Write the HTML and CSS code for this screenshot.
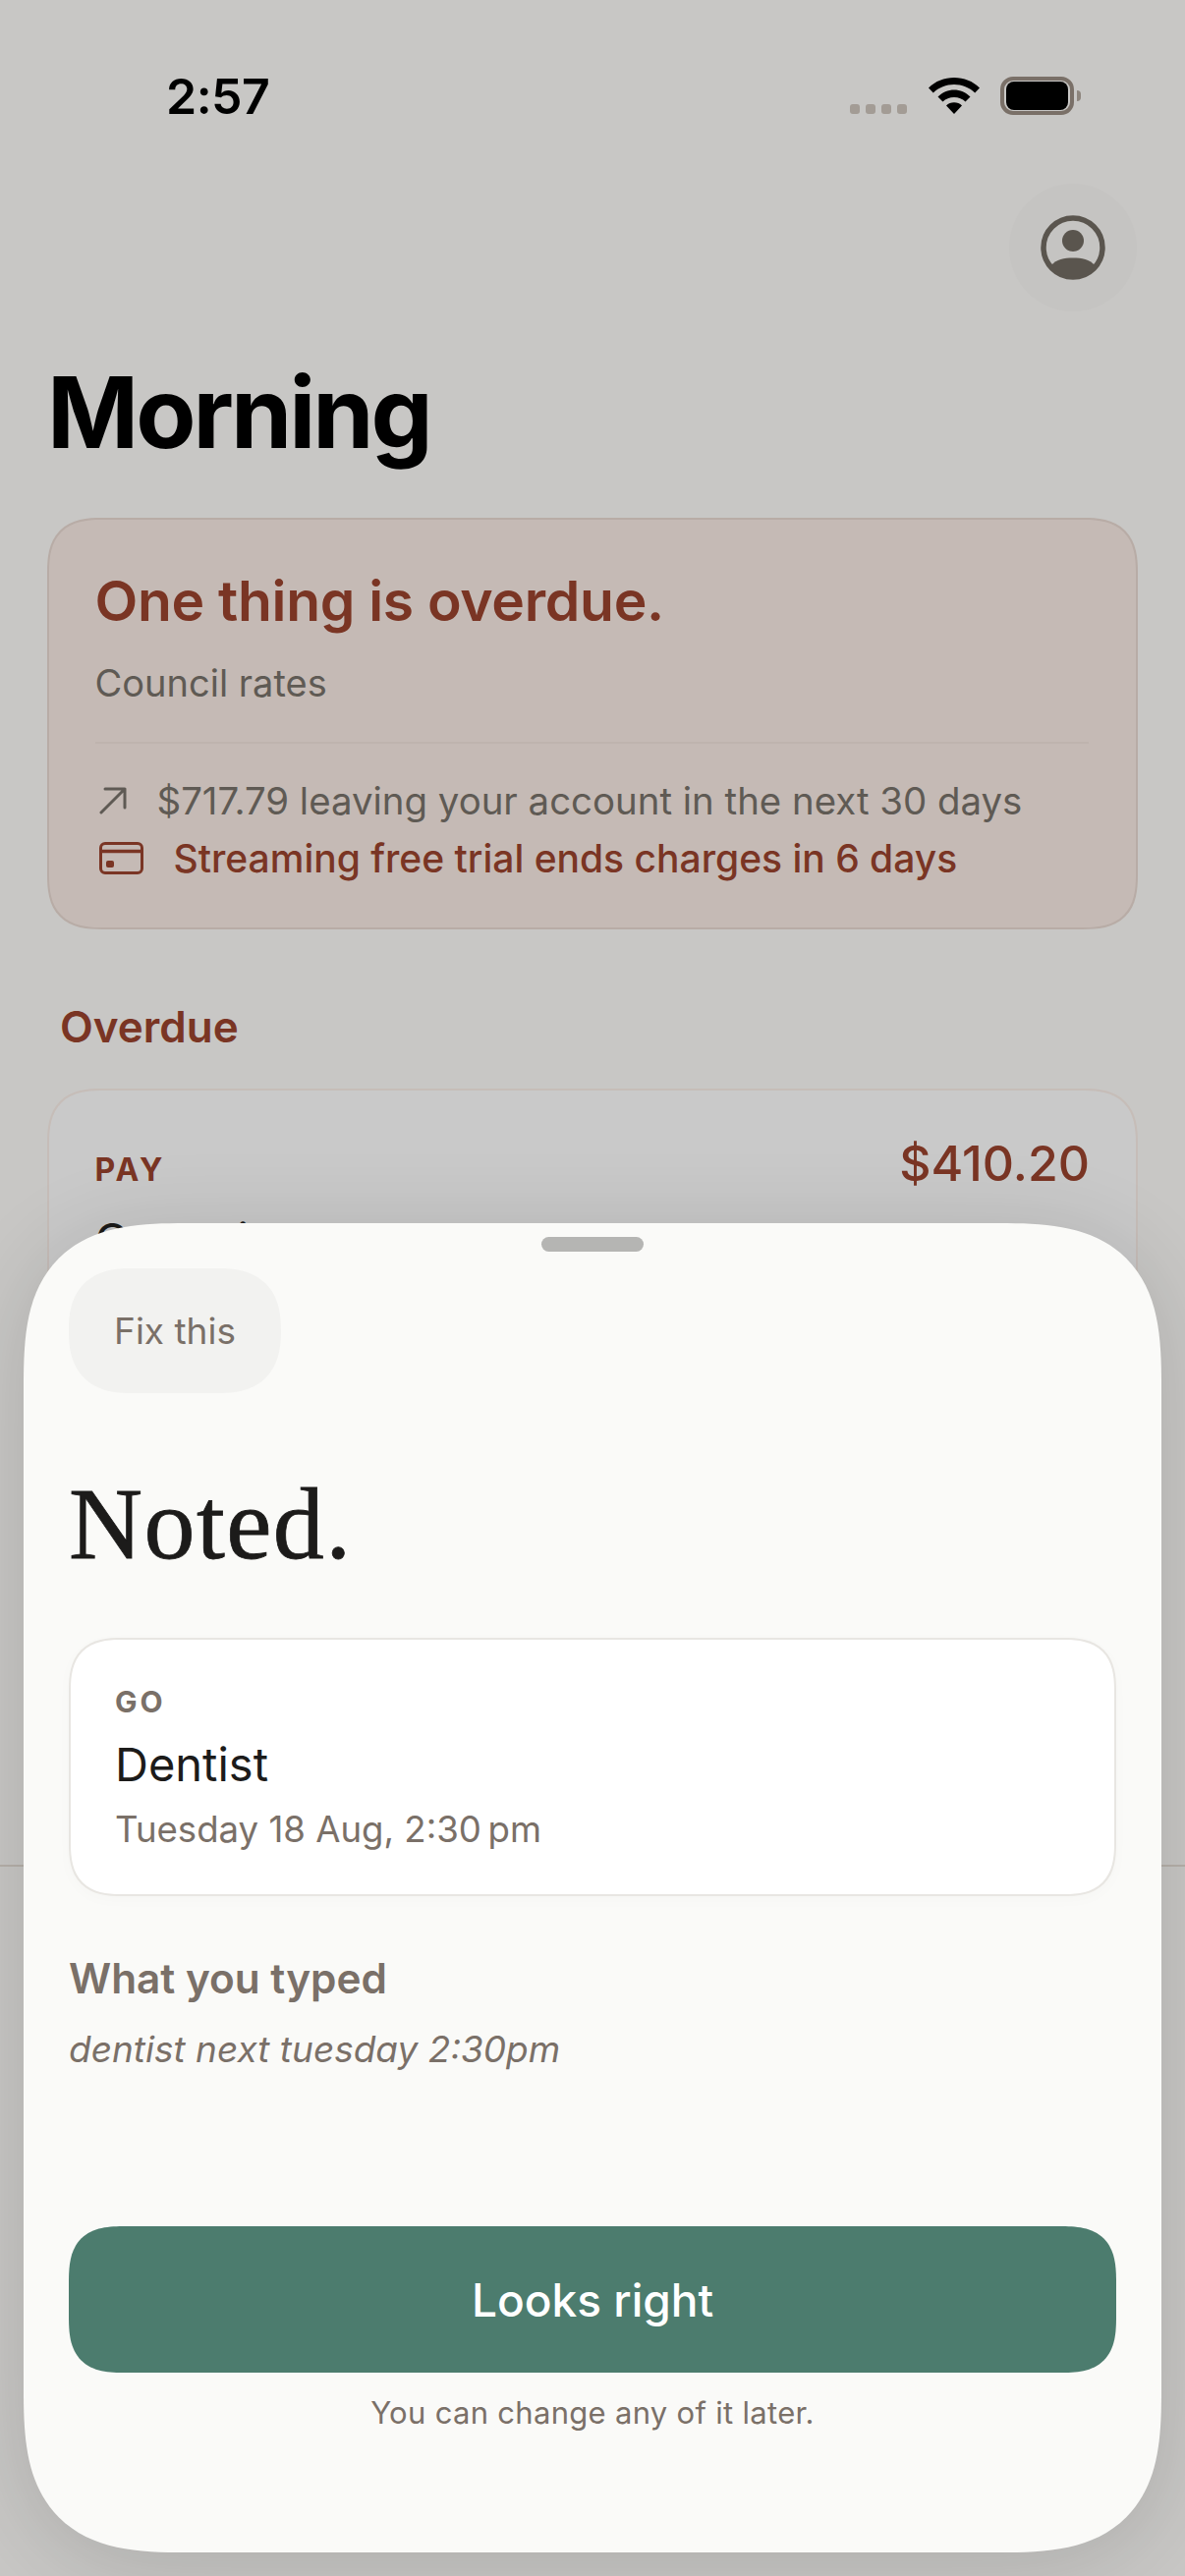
FILE: index.html
```html
<!DOCTYPE html>
<html lang="en">
<head>
<meta charset="utf-8">
<title>Morning</title>
<link rel="stylesheet" href="styles.css">
</head>
<body>
<div class="screen">
  <header class="status">
    <span class="clock">2:57</span>
    <div class="status-icons">
      <div class="signal"><i></i><i></i><i></i><i></i></div>
      <svg class="wifi" viewBox="0 0 52 38" width="52" height="38">
        <path d="M0 11.5C7 4.5 16 1 26 1s19 3.500 26 10.500l-4.800 5C41.500 11 34 8 26 8S10.500 11 4.800 16.500z"/>
        <path d="M9.500 20.500C14 16 20 13.500 26 13.500s12 2.500 16.500 7l-5 5C34.500 22.500 30.500 21 26 21s-8.500 1.500-11.500 4.500z"/>
        <path d="M18 29.500c2-2 5-3.200 8-3.200s6 1.200 8 3.200L26 38z"/>
      </svg>
      <div class="battery"><div class="battery-fill"></div></div>
      <div class="battery-nub"></div>
    </div>
  </header>

  <div class="topbar">
    <button class="avatar" aria-label="Profile">
      <svg viewBox="0 0 66 66" width="66" height="66">
        <circle cx="33" cy="33" r="30" fill="none" stroke="#5a554e" stroke-width="5.500"/>
        <circle cx="33" cy="26" r="11" fill="#5a554e"/>
        <path d="M11 51c5-6 13-7.500 22-7.500S50 45 55 51c-5.500 7-13 12-22 12s-16.500-5-22-12z" fill="#5a554e"/>
      </svg>
    </button>
  </div>

  <main class="home">
    <h1 class="greeting">Morning</h1>

    <section class="summary">
      <h2 class="summary-title">One thing is overdue.</h2>
      <p class="summary-sub">Council rates</p>
      <hr class="summary-rule">
      <div class="summary-row">
        <svg viewBox="0 0 28 28" width="28" height="28" class="row-icon">
          <path d="M2 26 26 2M6 2h20v19" fill="none" stroke="#5f5a54" stroke-width="3" stroke-linecap="round" stroke-linejoin="round"/>
        </svg>
        <span>$717.79 leaving your account in the next 30 days</span>
      </div>
      <div class="summary-row summary-row-alert">
        <svg viewBox="0 0 45 33" width="45" height="33" class="row-icon">
          <rect x="1.500" y="1.500" width="42" height="30" rx="4.500" fill="none" stroke="#7a3524" stroke-width="3"/>
          <path d="M1.500 9.500h42" stroke="#7a3524" stroke-width="3.500"/>
          <rect x="7" y="19" width="8" height="7" rx="2" fill="#7a3524"/>
        </svg>
        <span>Streaming free trial ends charges in 6 days</span>
      </div>
    </section>

    <h3 class="section-label">Overdue</h3>

    <article class="item">
      <div class="item-top">
        <span class="item-tag">PAY</span>
        <span class="item-amount">$410.20</span>
      </div>
      <div class="item-name">Council rates</div>
    </article>
  </main>

  <div class="tabbar"></div>

  <aside class="sheet">
    <div class="handle"></div>
    <button class="fix">Fix this</button>
    <h2 class="noted">Noted.</h2>
    <div class="entry">
      <div class="entry-tag">GO</div>
      <div class="entry-name">Dentist</div>
      <div class="entry-when">Tuesday 18 Aug, 2:30&#8201;pm</div>
    </div>
    <h3 class="typed-label">What you typed</h3>
    <p class="typed-text">dentist next tuesday 2:30pm</p>
    <button class="confirm">Looks right</button>
    <p class="footnote">You can change any of it later.</p>
  </aside>
</div>
</body>
</html>
```

FILE: styles.css
```css
* { box-sizing: border-box; }

html, body {
  margin: 0;
  padding: 0;
}

body {
  font-family: Inter, "Liberation Sans", sans-serif;
  background: #c8c7c5;
}

button {
  font-family: inherit;
  border: 0;
  padding: 0;
}

.screen {
  position: relative;
  width: 1206px;
  height: 2622px;
  overflow: hidden;
  background: #c8c7c5;
}

/* Status bar */
.status {
  height: 120px;
  padding: 71px 106px 0 169px;
  display: flex;
  justify-content: space-between;
  align-items: flex-start;
}

.clock {
  font-size: 50px;
  line-height: 54px;
  font-weight: 600;
  color: #000;
  letter-spacing: -0.500px;
}

.status-icons {
  display: flex;
  align-items: flex-start;
  padding-top: 7px;
}

.signal {
  display: flex;
  gap: 6px;
  margin: 28px 22px 0 0;
}

.signal i {
  width: 10px;
  height: 10px;
  border-radius: 3px;
  background: #a39c95;
}

.wifi {
  fill: #000;
  margin-right: 21px;
}

.battery {
  width: 75px;
  height: 39px;
  padding: 1px 2px;
  border: 4px solid #7a7068;
  border-radius: 13px;
}

.battery-fill {
  height: 100%;
  border-radius: 8px;
  background: #000;
}

.battery-nub {
  width: 4px;
  height: 11px;
  margin: 14px 0 0 3px;
  border-radius: 0 4px 4px 0;
  background: #8d857d;
}

/* Profile button */
.topbar {
  height: 197px;
  padding: 67px 49px 0 0;
  display: flex;
  justify-content: flex-end;
  align-items: flex-start;
}

.avatar {
  width: 130px;
  height: 130px;
  border-radius: 50%;
  display: flex;
  align-items: center;
  justify-content: center;
  background: #c5c4c2;
}

/* Home content */
.home {
  padding: 0 48px;
}

.greeting {
  margin: 43px 0 0;
  font-size: 100px;
  line-height: 120px;
  font-weight: 700;
  letter-spacing: -3px;
  color: #000;
}

.summary {
  margin-top: 47px;
  height: 419px;
  padding: 49px 48px 0 46.500px;
  border: 2px solid #b8aca6;
  border-radius: 56px;
  corner-shape: superellipse(1.4);
  background: #c5bab5;
}

.summary-title {
  margin: 0;
  font-size: 57px;
  line-height: 68px;
  font-weight: 600;
  letter-spacing: -0.300px;
  color: #7a3524;
}

.summary-sub {
  margin: 27px 0 0;
  font-size: 38px;
  line-height: 44px;
  color: #5f5a54;
}

.summary-rule {
  margin: 38px 0 28px;
  border: 0;
  border-top: 2px solid #bfb4ae;
}

.summary-row {
  display: flex;
  align-items: center;
  height: 59px;
  font-size: 38.400px;
  color: #5f5a54;
}

.row-icon {
  margin: 0 31px 0 4px;
}

.summary-row-alert {
  font-size: 39px;
  font-weight: 500;
  color: #7a3524;
}

.section-label {
  margin: 73px 0 0 13px;
  font-size: 44px;
  line-height: 52px;
  font-weight: 600;
  color: #7a3524;
}

.item {
  margin-top: 37px;
  height: 400px;
  padding: 48px 47px 48px 46.500px;
  border: 2px solid #c6bdb8;
  border-radius: 56px;
  corner-shape: superellipse(1.4);
  background: #c9c9c9;
}

.item-top {
  display: flex;
  justify-content: space-between;
  align-items: baseline;
}

.item-tag {
  font-size: 32px;
  line-height: 52px;
  font-weight: 700;
  letter-spacing: 3px;
  color: #7a3524;
}

.item-amount {
  font-size: 50px;
  line-height: 52px;
  font-weight: 500;
  color: #7a3524;
}

.item-name {
  margin-top: 17px;
  font-size: 47px;
  line-height: 56px;
  color: #1c1b1a;
}

/* Hairline of the bottom navigation, mostly hidden by the sheet */
.tabbar {
  position: absolute;
  left: 0;
  right: 0;
  top: 1898px;
  bottom: 0;
  border-top: 2px solid #b6b0aa;
}

/* Bottom sheet */
.sheet {
  position: absolute;
  left: 24px;
  top: 1245px;
  width: 1158px;
  height: 1353px;
  padding: 14px 46px 0;
  border-radius: 165px;
  corner-shape: superellipse(1.5);
  background: #fafaf8;
  box-shadow: 0 12px 90px rgba(0, 0, 0, 0.14);
  display: flex;
  flex-direction: column;
  align-items: flex-start;
}

.handle {
  align-self: center;
  width: 104px;
  height: 15px;
  border-radius: 8px;
  background: #b5b5b3;
}

.fix {
  margin-top: 17px;
  width: 216px;
  height: 127px;
  border-radius: 64px;
  corner-shape: superellipse(1.3);
  font-size: 37px;
  color: #7a7068;
  background: #f2f2f0;
}

.noted {
  margin: 73px 0 0;
  font-family: "Liberation Serif", serif;
  font-size: 104px;
  line-height: 120px;
  font-weight: 400;
  letter-spacing: 1.400px;
  -webkit-text-stroke: 0.8px #1c1b1a;
  color: #1c1b1a;
}

.entry {
  align-self: stretch;
  margin-top: 56px;
  height: 263px;
  padding: 45px 45px;
  border: 2px solid #e8e6e2;
  border-radius: 54px;
  corner-shape: superellipse(1.4);
  background: #fff;
  box-shadow: 0 4px 16px rgba(0, 0, 0, 0.02);
}

.entry-tag {
  font-size: 30px;
  line-height: 36px;
  font-weight: 700;
  letter-spacing: 3px;
  color: #7a7068;
}

.entry-name {
  margin-top: 18px;
  font-size: 47px;
  line-height: 56px;
  color: #1c1b1a;
}

.entry-when {
  margin-top: 16px;
  font-size: 36.600px;
  line-height: 44px;
  color: #7a7068;
}

.typed-label {
  margin: 59px 0 0;
  font-size: 42.300px;
  line-height: 50px;
  font-weight: 600;
  color: #7a7068;
}

.typed-text {
  margin: 25px 0 0;
  font-size: 37px;
  line-height: 44px;
  font-style: italic;
  color: #7a7068;
}

.confirm {
  align-self: stretch;
  margin-top: 158px;
  height: 149px;
  border-radius: 58px;
  corner-shape: superellipse(1.5);
  font-size: 46px;
  font-weight: 500;
  color: #fff;
  background: #4c7c6e;
}

.footnote {
  align-self: center;
  margin: 22px 0 0;
  font-size: 31px;
  line-height: 38px;
  letter-spacing: 0.300px;
  color: #7a7068;
}
```
